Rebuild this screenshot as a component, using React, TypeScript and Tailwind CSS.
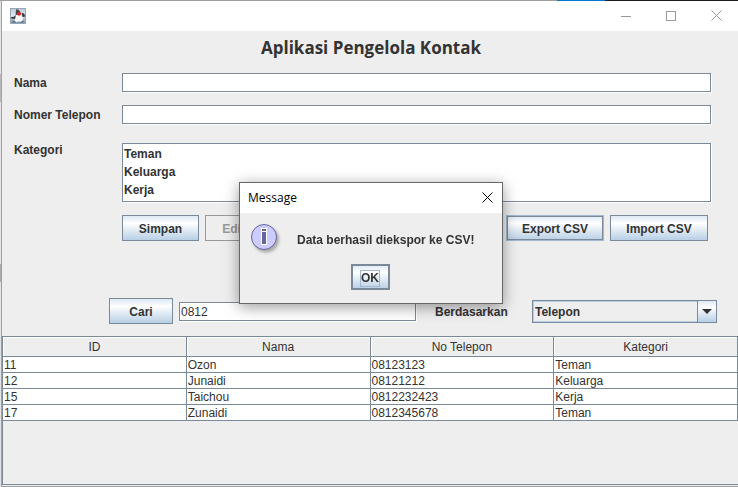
import React from "react";

const sans = "font-['Liberation_Sans',Arial,sans-serif]";
const humanist = "font-['Open_Sans','Noto_Sans',sans-serif]";
const field =
  "h-[19px] min-w-0 rounded-none border border-[#7a8a99] bg-white px-px text-xs text-[#333] shadow-[1px_1px_0_#fff] outline-none";
const metal =
  "h-[26px] shrink-0 border border-[#7a8a99] bg-linear-to-b from-[#dde8f3] via-white via-30% to-[#b8cfe5] pt-0.5 text-xs font-bold";

const contacts = [
  ["11", "Ozon", "08123123", "Teman"],
  ["12", "Junaidi", "08121212", "Keluarga"],
  ["15", "Taichou", "0812232423", "Kerja"],
  ["17", "Zunaidi", "0812345678", "Teman"],
];

function DukeIcon() {
  return (
    <svg width="16" height="16" viewBox="0 0 16 16" aria-hidden="true">
      <defs>
        <linearGradient id="duke-bg" x1="0" y1="0" x2="0" y2="1">
          <stop offset="0" stopColor="#b9c9d6" />
          <stop offset="0.45" stopColor="#dfe7ee" />
          <stop offset="1" stopColor="#7795ad" />
        </linearGradient>
      </defs>
      <rect x="0.5" y="0.5" width="15" height="15" fill="url(#duke-bg)" stroke="#93a7b7" />
      <path d="M6.6 1 C8.8 1.4 10.6 3.6 11.4 7 L6 8 C5.4 5.4 5.6 2.8 6.6 1Z" fill="#4a4548" />
      <path d="M5.6 7 L11.6 6.6 L12.8 10 L12.4 14 L9 13.2 L5 14.2 L4.6 10Z" fill="#fafafa" />
      <path d="M1 9 L3.4 9 L5.8 7 L5.2 11 L1.6 10.8Z M11.6 5.6 L13.4 5 L15 7 L14.6 9 L12.6 9Z" fill="#3e3e42" />
      <path d="M2 12.6 L5 13 L6.4 14.8 H3Z M12.6 12.4 L14 13 L12.6 14.8 H10Z" fill="#66727d" />
      <circle cx="9" cy="5.8" r="1.9" fill="#e8202a" />
    </svg>
  );
}

function InfoIcon() {
  return (
    <svg width="32" height="32" viewBox="0 0 32 32" aria-hidden="true">
      <defs>
        <filter id="info-shadow" x="-20%" y="-20%" width="150%" height="150%">
          <feGaussianBlur stdDeviation="1.4" />
        </filter>
      </defs>
      <circle cx="16" cy="16.5" r="13" fill="#999" opacity="0.8" filter="url(#info-shadow)" />
      <circle cx="14" cy="14" r="12.5" fill="#ccf" stroke="#669" />
      <path d="M11 5h6v5h-6z M11 9h6v13h-6z" fill="#fff" />
      <path d="M12 6h4v2h-4z M12 9h4v12h-4z" fill="#669" />
    </svg>
  );
}

function CloseGlyph() {
  return (
    <svg width="11" height="11" viewBox="0 0 11 11" aria-hidden="true">
      <path d="M0.5 0.5 L10.5 10.5 M10.5 0.5 L0.5 10.5" stroke="currentColor" fill="none" />
    </svg>
  );
}

function TitleBar() {
  return (
    <header className="flex h-[30px] items-center bg-white pb-px pl-2 text-[#999]">
      <DukeIcon />
      <div className="ml-auto flex">
        <button type="button" aria-label="Minimize" className="grid h-7 w-[46px] place-items-center">
          <svg width="10" height="10" viewBox="0 0 10 10" aria-hidden="true">
            <path d="M0 5.5H10" stroke="currentColor" />
          </svg>
        </button>
        <button type="button" aria-label="Maximize" className="grid h-7 w-11 place-items-center">
          <svg width="10" height="10" viewBox="0 0 10 10" aria-hidden="true">
            <rect x="0.5" y="0.5" width="9" height="9" fill="none" stroke="currentColor" />
          </svg>
        </button>
        <button type="button" aria-label="Close" className="grid h-7 w-[45px] place-items-center pl-0.5">
          <CloseGlyph />
        </button>
      </div>
    </header>
  );
}

function ContactForm() {
  return (
    <form className="flex flex-col pr-[27px] pl-3" onSubmit={(e) => e.preventDefault()}>
      <div className="flex items-center">
        <label htmlFor="nama" className="w-[108px] shrink-0 font-bold">Nama</label>
        <input id="nama" type="text" className={`${field} flex-1`} />
      </div>
      <div className="mt-[13px] flex items-center">
        <label htmlFor="telepon" className="w-[108px] shrink-0 font-bold">Nomer Telepon</label>
        <input id="telepon" type="text" className={`${field} flex-1`} />
      </div>
      <div className="mt-[19px] flex items-start">
        <label htmlFor="kategori" className="w-[108px] shrink-0 leading-[14px] font-bold">Kategori</label>
        <select
          id="kategori"
          size={3}
          className="h-[59px] min-w-0 flex-1 appearance-none overflow-hidden rounded-none border border-[#7a8a99] bg-white px-px pt-[3px] shadow-[1px_1px_0_#fff] outline-none"
        >
          <option className="h-[18px] p-0 leading-[18px] font-bold">Teman</option>
          <option className="h-[18px] p-0 leading-[18px] font-bold">Keluarga</option>
          <option className="h-[18px] p-0 leading-[18px] font-bold">Kerja</option>
        </select>
      </div>
      <div className="mt-[13px] flex gap-1.5 pr-[3px] pl-[108px]">
        <button type="button" className={`${metal} w-[77px]`}>Simpan</button>
        <button type="button" disabled className="h-[26px] w-[57px] border border-[#999] pt-0.5 font-bold text-[#999]">
          Edit
        </button>
        <button
          type="button"
          className={`${metal} ml-auto w-[98px] shadow-[inset_0_0_0_1px_#7a8a99] border-[#a3b8cc]`}
        >
          Export CSV
        </button>
        <button type="button" className={`${metal} w-[98px]`}>Import CSV</button>
      </div>
    </form>
  );
}

function SearchRow() {
  return (
    <div className="mt-[57px] mb-3 flex items-center pr-[21px] pl-[107px]">
      <button type="button" className={`${metal} w-16`}>Cari</button>
      <input
        type="text"
        aria-label="Cari kontak"
        defaultValue="0812"
        className={`${field} ml-1.5 flex-1 pt-0.5`}
      />
      <label htmlFor="berdasarkan" className="ml-[19px] w-[97px] shrink-0 pt-px font-bold">Berdasarkan</label>
      <div className="relative w-[185px] shrink-0">
        <select
          id="berdasarkan"
          defaultValue="Telepon"
          className="block h-[23px] w-full appearance-none rounded-none border border-[#7a8a99] bg-[#eee] pt-px pl-0.5 font-bold shadow-[inset_0_0_0_1px_#b8cfe5] outline-none"
        >
          <option>Telepon</option>
          <option>Nama</option>
        </select>
        <span className="pointer-events-none absolute inset-y-0 right-0 grid w-5 place-items-center border border-[#7a8a99] bg-linear-to-b from-[#dde8f3] via-white via-30% to-[#b8cfe5]">
          <svg width="10" height="5" viewBox="0 0 10 5" aria-hidden="true">
            <path d="M0 0H10L5 5Z" fill="#333" />
          </svg>
        </span>
      </div>
    </div>
  );
}

function ContactTable() {
  return (
    <div className="mb-px flex-1 border-y border-l border-[#7a8a99]">
      <table className="w-full table-fixed border-separate border-spacing-0">
        <thead>
          <tr>
            {["ID", "Nama", "No Telepon", "Kategori"].map((h) => (
              <th
                key={h}
                className="h-5 border-r border-b border-[#7a8a99] p-0 pt-px leading-[18px] font-normal shadow-[inset_1px_1px_0_#fff]"
              >
                {h}
              </th>
            ))}
          </tr>
        </thead>
        <tbody>
          {contacts.map((row) => (
            <tr key={row[0]}>
              {row.map((cell, i) => (
                <td
                  key={i}
                  className="h-4 border-r border-b border-[#7a8a99] bg-white p-0 pt-px pl-px leading-[14px]"
                >
                  {cell}
                </td>
              ))}
            </tr>
          ))}
        </tbody>
      </table>
    </div>
  );
}

function MessageDialog() {
  return (
    <div className="fixed inset-0 grid place-items-center pb-px pl-1">
      <div
        role="dialog"
        aria-labelledby="dialog-title"
        className="w-[264px] border border-[#666] bg-[#eee] shadow-[0_3px_14px_rgba(0,0,0,0.4)]"
      >
        <div className="flex h-[30px] items-center justify-between bg-white pr-[9px] pb-px pl-2 text-black">
          <h2 id="dialog-title" className={`${humanist} pt-px text-xs`}>Message</h2>
          <button type="button" aria-label="Close">
            <CloseGlyph />
          </button>
        </div>
        <div className="flex h-[51px] items-center gap-[15px] pl-2.5">
          <InfoIcon />
          <p className="pt-0.5 font-bold">Data berhasil diekspor ke CSV!</p>
        </div>
        <div className="flex justify-center pr-0.5 pb-[13px]">
          <button
            type="button"
            className={`${metal} grid w-[39px] place-items-center shadow-[inset_0_0_0_1px_#7a8a99]`}
          >
            <span className="border border-[#a3b8cc] leading-[15px]">OK</span>
          </button>
        </div>
      </div>
    </div>
  );
}

export default function App() {
  return (
    <div className={`${sans} flex min-h-screen flex-col bg-[#eee] text-xs text-[#333]`}>
      <div className="flex h-px shrink-0">
        <div className="flex-1 bg-[#a0a0a0]" />
        <div className="w-12 bg-[#0078d7]" />
        <div className="w-[133px] bg-[#1b1b1b]" />
      </div>
      <div className="flex flex-1">
        <div className="flex w-px shrink-0 flex-col bg-[#e3e3e3]">
          <div className="mt-[73px] h-7 bg-[#bbb]" />
          <div className="mt-[162px] h-[18px] bg-[#aaa]" />
        </div>
        <main className="flex min-w-0 flex-1 flex-col border-b border-l border-[#a0a0a0]">
          <TitleBar />
          <h1 className={`${humanist} h-[42px] pl-0.5 text-center text-[17px] leading-[34px] font-bold`}>
            Aplikasi Pengelola Kontak
          </h1>
          <ContactForm />
          <SearchRow />
          <ContactTable />
        </main>
      </div>
      <MessageDialog />
    </div>
  );
}
